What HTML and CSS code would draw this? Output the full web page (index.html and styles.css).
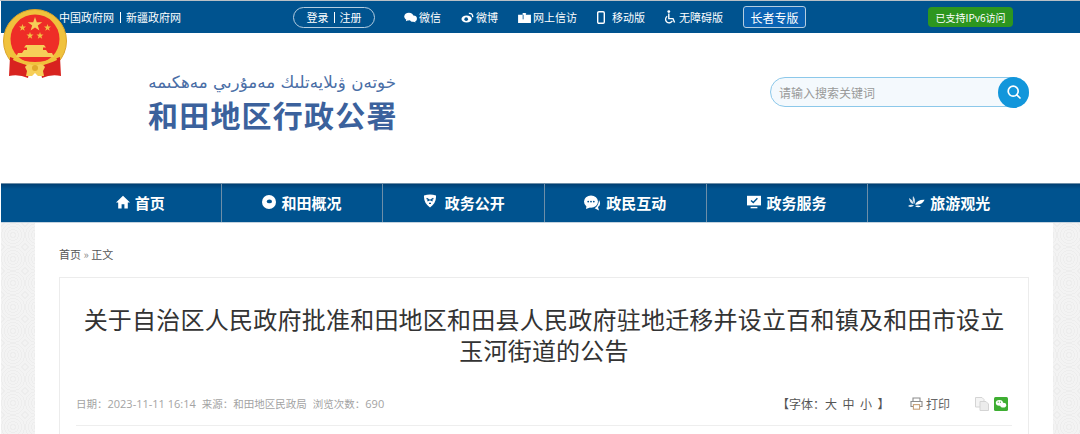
FILE: index.html
```html
<!DOCTYPE html>
<html lang="zh-CN">
<head>
  <meta charset="UTF-8" />
  <title>和田地区行政公署</title>
  <link rel="stylesheet" href="styles.css">
</head>
<body>

  <!-- Emblem -->
  <svg class="emblem" viewBox="0 0 66 70" xmlns="http://www.w3.org/2000/svg">
    <circle cx="33" cy="32" r="31.5" fill="#f0c23c" stroke="#dca52a" stroke-width="1"/>
    <circle cx="33" cy="30" r="24.5" fill="#ee2d27"/>
    <polygon points="33,8 34.8,13.2 40.2,13.2 35.8,16.4 37.4,21.6 33,18.4 28.6,21.6 30.2,16.4 25.8,13.2 31.2,13.2" fill="#f6cf58"/>
    <polygon points="20.5,15 21.4,17.6 24,17.6 21.9,19.2 22.7,21.8 20.5,20.2 18.3,21.8 19.1,19.2 17,17.6 19.6,17.6" fill="#f2c043"/>
    <polygon points="45.5,15 46.4,17.6 49,17.6 46.9,19.2 47.7,21.8 45.5,20.2 43.3,21.8 44.1,19.2 42,17.6 44.6,17.6" fill="#f2c043"/>
    <polygon points="28,23 28.9,25.6 31.5,25.6 29.4,27.2 30.2,29.8 28,28.2 25.8,29.8 26.6,27.2 24.5,25.6 27.1,25.6" fill="#f2c043"/>
    <polygon points="38,23 38.9,25.6 41.5,25.6 39.4,27.2 40.2,29.8 38,28.2 35.8,29.8 36.6,27.2 34.5,25.6 37.1,25.6" fill="#f2c043"/>
    <path d="M24 36 H42 L44 38.5 H41 V41 H44 L46 44 H20 L22 41 H25 V38.5 H22Z M16 44 H50 L52 48 H14Z" fill="#f6cf58"/>
    <path d="M8 48 L7 67 Q17 65 26 69 L28 58 L14 50Z" fill="#d8231f"/>
    <path d="M58 48 L59 67 Q49 65 40 69 L38 58 L52 50Z" fill="#d8231f"/>
    <path d="M12 48 Q33 58 54 48 L55 51 Q33 62 11 51Z" fill="#f0c23c"/>
    <path d="M23 58 a5 5 0 0 1 7 -2 h6 a5 5 0 0 1 7 2 l-2 4 l1 5 h-6 l-3 -3 l-3 3 h-6 l1 -5Z" fill="#f6cf58"/>
    <circle cx="33" cy="59" r="3" fill="#e0a92c"/>
  </svg>

  <!-- Top bar -->
  <div class="topbar">
    <div class="top-links"><span>中国政府网</span><i class="pipe"></i><span>新疆政府网</span></div>
    <a class="login-pill"><span>登录</span><i class="pipe"></i><span>注册</span></a>
    <a class="top-item">
      <svg viewBox="0 0 14 12"><ellipse cx="5.2" cy="5" rx="5" ry="4.2" fill="#fff"/><path d="M2.4 7.5 L2 10 L5 8.6Z" fill="#fff"/><ellipse cx="10" cy="7.3" rx="4" ry="3.4" fill="#fff"/><path d="M11.6 9.8 L12.6 11.4 L9.8 10.4Z" fill="#fff"/></svg>
      微信
    </a>
    <a class="top-item">
      <svg viewBox="0 0 14 12"><ellipse cx="6" cy="7.6" rx="5.6" ry="3.9" fill="#fff"/><circle cx="5.6" cy="7.8" r="2" fill="#00538f"/><path d="M8.5 1.6 Q12.6 1 12.8 5.6" fill="none" stroke="#fff" stroke-width="1.5"/></svg>
      微博
    </a>
    <a class="top-item">
      <svg viewBox="0 0 14 12"><path d="M0 3 H5 V1 H9 V3 H14 V12 H0Z" fill="#fff"/><path d="M5.5 3 V8 M9 3 V1" stroke="#00538f" stroke-width="0.9"/></svg>
      网上信访
    </a>
    <a class="top-item item-mobile">
      <svg class="icon-phone" viewBox="0 0 8 13"><rect x="0.7" y="0.7" width="6.6" height="11.6" rx="1.2" fill="none" stroke="#fff" stroke-width="1.4"/></svg>
      移动版
    </a>
    <a class="top-item">
      <svg class="icon-wheel" viewBox="0 0 12 14"><circle cx="4.8" cy="1.6" r="1.4" fill="#fff"/><path d="M4.8 3.6 V8.6 H9 L10.6 12.4" fill="none" stroke="#fff" stroke-width="1.4"/><path d="M3.2 6.2 A3.6 3.6 0 1 0 8.4 10.8" fill="none" stroke="#fff" stroke-width="1.3"/></svg>
      无障碍版
    </a>
    <a class="elder-btn">长者专版</a>
    <span class="ipv6">已支持IPv6访问</span>
  </div>

  <!-- Header -->
  <div class="header">
    <div class="logo">
      <div class="logo-ug" dir="rtl">خوتەن ۋىلايەتلىك مەمۇرىي مەھكىمە</div>
      <div class="logo-cn">和田地区行政公署</div>
    </div>
    <div class="search">
      <span>请输入搜索关键词</span>
      <span class="search-btn">
        <svg viewBox="0 0 16 16"><circle cx="7.2" cy="7.2" r="5" fill="none" stroke="#fff" stroke-width="1.7"/><path d="M10.8 10.8 L14 14" stroke="#fff" stroke-width="1.7" stroke-linecap="round"/></svg>
      </span>
    </div>
  </div>

  <!-- Nav -->
  <div class="nav">
    <ul class="nav-list">
      <li>
        <svg viewBox="0 0 14 14"><path d="M7 .8 L14 7.4 H11.8 V13.4 H8.4 V9.2 H5.6 V13.4 H2.2 V7.4 H0Z" fill="#fff"/></svg>
        首页
      </li>
      <li>
        <svg viewBox="0 0 14 14"><circle cx="7" cy="7" r="7" fill="#fff"/><ellipse cx="7.4" cy="6.4" rx="2.6" ry="1.9" fill="#00538f"/></svg>
        和田概况
      </li>
      <li>
        <svg class="icon-shield" viewBox="0 0 14 14"><path d="M1 1.5 Q7 -.5 13 1.5 Q13.5 9 7 13.5 Q.5 9 1 1.5Z" fill="#fff"/><path d="M3.6 4.4 L6.2 6 L4.4 7 M10.4 4.4 L7.8 6 L9.6 7 M6 9.4 H8" fill="none" stroke="#00538f" stroke-width="1.3"/></svg>
        政务公开
      </li>
      <li>
        <svg class="icon-chat" viewBox="0 0 17 16"><ellipse cx="7" cy="6.6" rx="7" ry="6.2" fill="#fff"/><path d="M2.6 10.6 L2 14 L6 12.4Z" fill="#fff"/><circle cx="4.2" cy="6.6" r=".9" fill="#00538f"/><circle cx="7" cy="6.6" r=".9" fill="#00538f"/><circle cx="9.8" cy="6.6" r=".9" fill="#00538f"/><path d="M15 5 Q17.6 9.6 14 12 L15 15.6 L10.6 13.2 Q14.4 11.4 15 5Z" fill="#fff"/></svg>
        政民互动
      </li>
      <li>
        <svg viewBox="0 0 14 14"><path d="M0 .8 H14 V10.4 H0Z" fill="#fff"/><path d="M4 5.4 L6.3 7.6 L10.4 3.2" fill="none" stroke="#00538f" stroke-width="1.4"/><path d="M3.6 12.6 H10.4" stroke="#fff" stroke-width="1.4"/></svg>
        政务服务
      </li>
      <li>
        <svg class="icon-leaf" viewBox="0 0 17 14"><path d="M1 3 Q5 5 5.6 9 Q1.6 8.6 1 3Z M0 11 Q3 8.6 6 10.6 Q3 13 0 11Z" fill="#dbe6ef"/><path d="M5 1 Q8 4 6.4 9 Q4 5.6 5 1Z" fill="#cfdde9"/><path d="M7 9.6 Q9.6 4.4 16.6 4.8 Q14 10.4 7 9.6Z M7 11 Q10 9.6 13 11.6 Q9.6 13.4 7 11Z" fill="#fff"/></svg>
        旅游观光
      </li>
    </ul>
  </div>

  <!-- Content -->
  <div class="page">
    <div class="panel">
      <div class="crumbs">首页 <em>»</em> 正文</div>
      <div class="article">
        <h1 class="article-title">关于自治区人民政府批准和田地区和田县人民政府驻地迁移并设立百和镇及和田市设立玉河街道的公告</h1>
        <div class="meta">
          <div class="meta-left">
            <span>日期：<span class="num">2023-11-11 16:14</span></span>
            <span>来源：和田地区民政局</span>
            <span>浏览次数：<span class="num">690</span></span>
          </div>
          <div class="font-size">【字体：<b>大</b><b>中</b><b>小</b>】</div>
          <div class="print">
            <svg viewBox="0 0 13 13"><path d="M3 4 V1 H10 V4 M3 9.5 H1 V4.5 H12 V9.5 H10" fill="none" stroke="#8c8c8c" stroke-width="1.1"/><rect x="3.4" y="7.6" width="6.2" height="4.6" fill="none" stroke="#c9a27a" stroke-width="1.1"/></svg>
            打印
          </div>
          <svg class="share-copy" viewBox="0 0 14 14"><path d="M.5 .5 H7 L9 2.5 V10 H.5Z" fill="#f4f4f4" stroke="#d4d4d4"/><path d="M5 4.5 H11 L13.5 7 V13.5 H5Z" fill="#ececec" stroke="#d4d4d4"/></svg>
          <svg class="share-wx" viewBox="0 0 14 14"><rect width="14" height="14" rx="1.5" fill="#3eae32"/><ellipse cx="5.4" cy="5.8" rx="3.6" ry="2.9" fill="#fff"/><ellipse cx="9.2" cy="8.2" rx="3" ry="2.4" fill="#fff"/><circle cx="4.2" cy="5.2" r=".6" fill="#3eae32"/><circle cx="6.4" cy="5.2" r=".6" fill="#3eae32"/></svg>
        </div>
      </div>
    </div>
  </div>

</body>
</html>
```

FILE: styles.css
```css
* { box-sizing: border-box; margin: 0; padding: 0; }
html, body { height: 434px; overflow: hidden; }
body {
  position: relative;
  padding-left: 1px;
  border-top: 1px solid #b9c0c6;
  font-family: "Noto Sans CJK SC", "Liberation Sans", sans-serif;
  color: #333;
  background: #fff;
}
a { color: inherit; text-decoration: none; }
svg { display: block; flex: none; }

.emblem {
  position: absolute;
  top: 8px;
  left: 2px;
  width: 66px;
  height: 70px;
}

/* TOP BAR */
.topbar {
  display: flex;
  align-items: center;
  height: 32px;
  padding-left: 58px;
  color: #fff;
  font-size: 11px;
  background: #00538f;
}
.pipe {
  width: 1px;
  height: 11px;
  margin: 0 5px;
  background: #fff;
}
.top-links {
  display: flex;
  align-items: center;
  width: 234px;
}
.top-links .pipe { margin: 0 5.5px; }
.login-pill {
  display: flex;
  align-items: center;
  justify-content: center;
  width: 82px;
  height: 21px;
  margin-right: 29px;
  border: 1px solid #b5cde0;
  border-radius: 11px;
}
.top-item {
  display: flex;
  align-items: center;
  gap: 2px;
  margin-right: 20px;
}
.top-item svg { width: 13px; height: 11px; }
.top-item .icon-phone { width: 8px; height: 13px; margin-right: 5px; }
.top-item .icon-wheel { width: 12px; height: 14px; margin-right: 1px; }
.item-mobile { margin-right: 19px; }
.elder-btn {
  display: flex;
  align-items: center;
  justify-content: center;
  width: 63px;
  height: 22px;
  font-size: 12px;
  background: #0a63b3;
  border: 1px solid #b5cde0;
  border-radius: 3px;
}
.ipv6 {
  display: flex;
  align-items: center;
  justify-content: center;
  width: 85px;
  height: 20px;
  margin-left: 122px;
  font-size: 10px;
  background: #2d961f;
  border-radius: 4px;
}

/* HEADER */
.header {
  display: flex;
  align-items: flex-start;
  justify-content: space-between;
  height: 150px;
  padding: 37px 51px 0 147px;
}
.logo { width: 248px; }
.logo-ug {
  height: 24px;
  font-family: "DejaVu Sans", sans-serif;
  font-size: 16.7px;
  line-height: 24px;
  white-space: nowrap;
  color: #4a6ea6;
}
.logo-cn {
  font-size: 30px;
  font-weight: 700;
  line-height: 40px;
  letter-spacing: 1.2px;
  white-space: nowrap;
  color: #3b619c;
}
.search {
  display: flex;
  align-items: center;
  justify-content: space-between;
  width: 259px;
  height: 30px;
  margin-top: 7px;
  padding-left: 8px;
  background: #f4f9fd;
  border: 1px solid #8cc8ea;
  border-radius: 15px;
  font-size: 12px;
  color: #999;
}
.search-btn {
  display: flex;
  align-items: center;
  justify-content: center;
  width: 31px;
  height: 31px;
  margin-right: -1px;
  background: #1296db;
  border-radius: 50%;
}
.search-btn svg { width: 16px; height: 16px; }

/* NAV */
.nav {
  height: 40px;
  background: linear-gradient(#003f73 0, #00538f 5px);
  border-top: 1px solid #6d8ea8;
  border-bottom: 1px solid #c4d3df;
}
.nav-list {
  display: grid;
  grid-template-columns: repeat(6, 1fr);
  width: 970px;
  height: 100%;
  margin-left: 59px;
  list-style: none;
}
.nav-list li {
  display: flex;
  align-items: center;
  justify-content: center;
  gap: 5px;
  padding-bottom: 2px;
  font-size: 15px;
  font-weight: 700;
  color: #fff;
  border-right: 1px solid #6d8ea8;
}
.nav-list li:last-child { border-right: 0; }
.nav-list svg { width: 14px; height: 14px; }
.nav-list .icon-shield { margin: -3px 3px 0 0; }
.nav-list .icon-chat { width: 17px; height: 16px; margin-top: 2px; }
.nav-list .icon-leaf { width: 17px; height: 14px; }

/* CONTENT */
.page {
  height: 211px;
  padding-left: 34px;
  background-color: #f1f1f1;
  background-image: repeating-radial-gradient(circle at 12px 12px, #f3f3f3 0, #f3f3f3 2px, #ededed 2px, #ededed 3px);
  background-size: 24px 24px;
}
.panel {
  display: flex;
  flex-direction: column;
  width: 1018px;
  height: 100%;
  padding: 23px 24px 0;
  background: #fff;
}
.crumbs {
  height: 16px;
  font-size: 11px;
  line-height: 16px;
  color: #555;
}
.crumbs em { font-style: normal; color: #888; }
.article {
  flex: 1;
  margin-top: 15px;
  padding: 0 16px;
  border: 1px solid #ececec;
  border-bottom: 0;
}
.article-title {
  padding: 25px 4px 0;
  font-size: 24px;
  font-weight: 400;
  line-height: 31px;
  letter-spacing: .23px;
  text-align: center;
  color: #333;
}
.meta {
  display: flex;
  align-items: center;
  height: 38px;
  margin-top: 23px;
  padding-bottom: 6px;
  border-bottom: 1px solid #eee;
  font-family: "Open Sans", "Noto Sans CJK SC", sans-serif;
  font-size: 10.5px;
  color: #a3a3a3;
}
.num { font-size: 11px; }
.meta-left {
  display: flex;
  gap: 6px;
  width: 701px;
}
.font-size {
  display: flex;
  width: 133px;
  font-size: 12px;
  color: #555;
}
.font-size b { margin-right: 5.5px; font-weight: 400; }
.print {
  display: flex;
  align-items: center;
  gap: 3px;
  width: 65px;
  font-size: 12px;
  color: #666;
}
.print svg { width: 13px; height: 13px; }
.share-copy { width: 14px; height: 14px; margin-right: 5px; }
.share-wx { width: 14px; height: 14px; }
```
